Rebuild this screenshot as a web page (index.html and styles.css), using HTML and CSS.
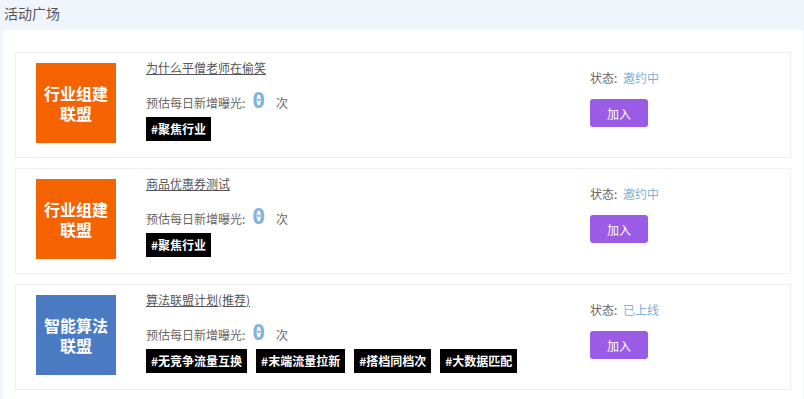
FILE: index.html
```html
<!DOCTYPE html>
<html lang="zh">

<head>
    <meta charset="UTF-8">
    <meta name="viewport" content="width=device-width, initial-scale=1.0">
    <title>活动广场</title>
    <link rel="stylesheet" href="styles.css">
</head>

<body>
    <div class="page-title">活动广场</div>
    <div class="panel">
        <div class="card">
            <div class="logo orange"><span>行业组建</span><span>联盟</span></div>
            <div class="info">
                <a class="name" href="#">为什么平僧老师在偷笑</a>
                <div class="exposure">预估每日新增曝光: <span class="num">0</span> 次</div>
                <div class="tags">
                    <span class="tag">#聚焦行业</span>
                </div>
            </div>
            <div class="side">
                <div class="status">状态: <span>邀约中</span></div>
                <button class="btn">加入</button>
            </div>
        </div>
        <div class="card">
            <div class="logo orange"><span>行业组建</span><span>联盟</span></div>
            <div class="info">
                <a class="name" href="#">商品优惠券测试</a>
                <div class="exposure">预估每日新增曝光: <span class="num">0</span> 次</div>
                <div class="tags">
                    <span class="tag">#聚焦行业</span>
                </div>
            </div>
            <div class="side">
                <div class="status">状态: <span>邀约中</span></div>
                <button class="btn">加入</button>
            </div>
        </div>
        <div class="card">
            <div class="logo blue"><span>智能算法</span><span>联盟</span></div>
            <div class="info">
                <a class="name" href="#">算法联盟计划(推荐)</a>
                <div class="exposure">预估每日新增曝光: <span class="num">0</span> 次</div>
                <div class="tags">
                    <span class="tag">#无竞争流量互换</span>
                    <span class="tag">#末端流量拉新</span>
                    <span class="tag">#搭档同档次</span>
                    <span class="tag">#大数据匹配</span>
                </div>
            </div>
            <div class="side">
                <div class="status">状态: <span>已上线</span></div>
                <button class="btn">加入</button>
            </div>
        </div>
    </div>
</body>

</html>
```

FILE: styles.css
```css
* {
    box-sizing: border-box;
    padding: 0;
    margin: 0;
}

html,
body {
    width: 100%;
    height: 100%;
}

body {
    background: #f0f4fb;
    font-family: "Noto Sans CJK SC", "Noto Sans", sans-serif;
    font-size: 12px;
    color: #666;
    overflow: hidden;
}

.page-title {
    height: 30px;
    padding: 2px 4px 0;
    font-size: 14px;
    line-height: 22px;
    color: #555;
}

.panel {
    margin: 0 1px 0 3px;
    padding: 22px 12px 10px;
    background: #fff;
    display: flex;
    flex-direction: column;
    gap: 10px;
}

.card {
    display: flex;
    height: 106px;
    border: 1px solid #eeeeee;
    padding: 10px 0 0 20px;
}

.logo {
    width: 80px;
    height: 80px;
    flex-shrink: 0;
    display: flex;
    flex-direction: column;
    align-items: center;
    justify-content: center;
    text-align: center;
    color: #fff;
    font-size: 16px;
    font-weight: bold;
}

.logo span {
    display: block;
    line-height: 20px;
}

.orange {
    background: #f56300;
}

.blue {
    background: #4a7bc2;
}

.info {
    width: 444px;
    margin-left: 30px;
    display: flex;
    flex-direction: column;
    align-items: flex-start;
}

.name {
    color: #555;
    font-size: 12px;
    line-height: 12px;
    margin-top: -1px;
    text-decoration: underline;
}

.exposure {
    margin-top: 13px;
    line-height: 28px;
    color: #666;
}

.num {
    font-family: "DejaVu Sans Mono", monospace;
    font-weight: bold;
    font-size: 22px;
    color: #82b3de;
    margin: 0 8px 0 4px;
}

.tags {
    display: flex;
    gap: 9px;
    margin-top: 0;
}

.tag {
    background: #000;
    color: #fff;
    font-weight: bold;
    height: 24px;
    line-height: 24px;
    padding: 0 5px;
}

.side {
    display: flex;
    flex-direction: column;
    align-items: flex-start;
    padding-top: 5px;
}

.status {
    line-height: 20px;
    color: #666;
}

.status span {
    color: #7faedb;
    margin-left: 3px;
}

.btn {
    margin-top: 11px;
    width: 58px;
    height: 28px;
    border: none;
    border-radius: 3px;
    background: #9a5ce6;
    color: #fff;
    font-family: "Noto Sans CJK SC", sans-serif;
    font-size: 12px;
}
```
